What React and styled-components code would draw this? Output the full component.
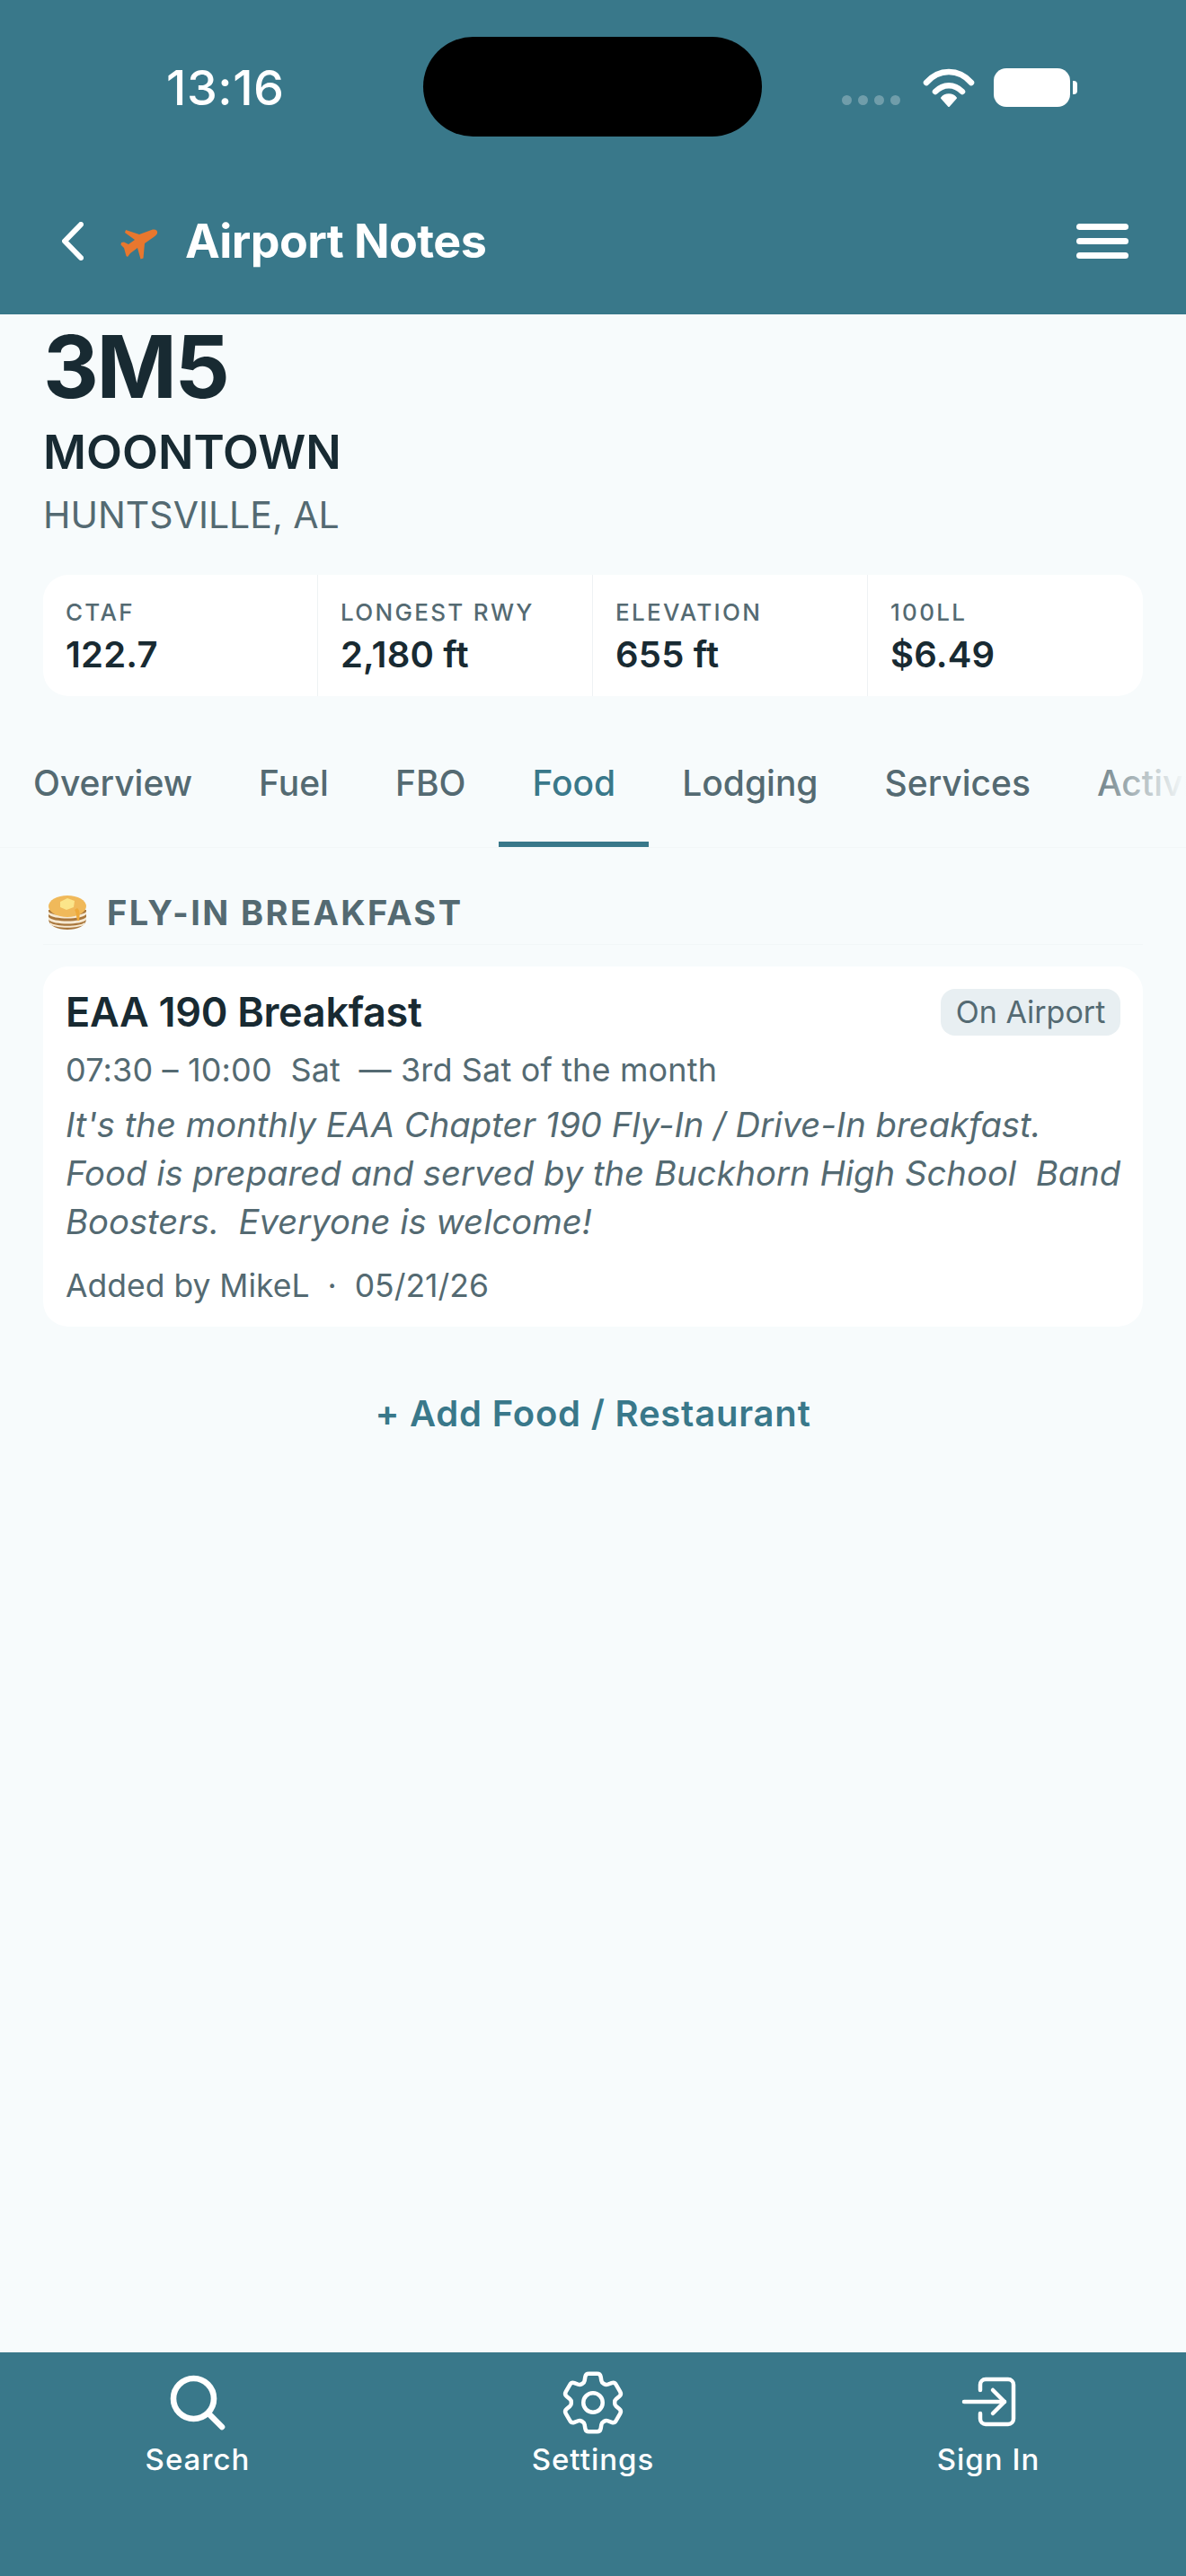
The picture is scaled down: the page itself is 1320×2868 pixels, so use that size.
import React from 'react';
import styled, { createGlobalStyle } from 'styled-components';
import { HiOutlineMagnifyingGlass, HiOutlineCog6Tooth } from 'react-icons/hi2';

const TEAL = '#39788a';
const INK = '#182a32';
const MUTED = '#546a72';
const PAGE = '#f7fbfc';

const stats = [
  { label: 'CTAF', value: '122.7' },
  { label: 'LONGEST RWY', value: '2,180 ft' },
  { label: 'ELEVATION', value: '655 ft' },
  { label: '100LL', value: '$6.49' },
];

const tabs = ['Overview', 'Fuel', 'FBO', 'Food', 'Lodging', 'Services', 'Activity'];

const GlobalStyle = createGlobalStyle`
  html, body {
    margin: 0;
    padding: 0;
    background: ${PAGE};
  }
  * {
    box-sizing: border-box;
  }
`;

const PlaneIcon = () => (
  <PlaneSvg viewBox="0 0 44 36">
    <path d="M7 2L22 7L37 1.5Q43 1 42 6Q41 8 38 10L28 17L26.5 33.5L23.5 34.5L20 22L12 28L9 32L7.5 31L5 22L1.5 18.5L2 16L5 15.5L10 18L17 13L6 5Z" />
  </PlaneSvg>
);

const WifiIcon = () => (
  <WifiSvg viewBox="0 0 58 44" fill="none" stroke="#fff" strokeLinecap="round">
    <path d="M4 17C18 1 40 1 54 17" strokeWidth="6.5" />
    <path d="M14 27c9-9 21-9 30 0" strokeWidth="6.5" />
    <path d="M29 43l-8-9c4-5 12-5 16 0z" fill="#fff" stroke="#fff" strokeWidth="2" strokeLinejoin="round" />
  </WifiSvg>
);

const PancakeIcon = () => (
  <svg width="44" height="38" viewBox="0 0 44 38">
    <path d="M1 16v10c0 8 10 12 21 12s21-4 21-12V16z" fill="#a8763c" />
    <path d="M1 18c5 6 37 6 42 0v3c-5 6-37 6-42 0z" fill="#f6e9d2" />
    <path d="M1 24c5 6 37 6 42 0v3c-5 6-37 6-42 0z" fill="#f6e9d2" />
    <path d="M3 30c5 5 33 5 38 0v2c-5 5-33 5-38 0z" fill="#f6e9d2" />
    <ellipse cx="22" cy="12" rx="21" ry="12" fill="#f0b95a" />
    <path d="M14 7l8-4 8 3-1 7-8 3-7-3z" fill="#fbe58a" />
    <path d="M33 14c3 2 3 8 2 14h-2c-1-4-1-9-3-12z" fill="#eea93a" />
  </svg>
);

const SignInIcon = () => (
  <svg width="72" height="72" viewBox="0 0 72 72" fill="none" stroke="#fff" strokeWidth="4.5" strokeLinecap="round" strokeLinejoin="round">
    <path d="M27 22v-6a6 6 0 0 1 6-6h25a6 6 0 0 1 6 6v38a6 6 0 0 1-6 6H33a6 6 0 0 1-6-6v-6" />
    <path d="M9 35h45" />
    <path d="M41 22l13 13-13 13" />
  </svg>
);

export default function App() {
  return (
    <Page>
      <GlobalStyle />
      <Header>
        <StatusBar>
          <Clock>13:16</Clock>
          <Island />
          <StatusIcons>
            <Dots>
              <Dot />
              <Dot />
              <Dot />
              <Dot />
            </Dots>
            <WifiIcon />
            <Battery>
              <BatteryNub />
            </Battery>
          </StatusIcons>
        </StatusBar>
        <NavRow>
          <BackChevron viewBox="0 0 24 43" fill="none" stroke="#fff" strokeWidth="6" strokeLinecap="round" strokeLinejoin="round">
            <path d="M21 3L3 21.5 21 40" />
          </BackChevron>
          <PlaneIcon />
          <NavTitle>Airport Notes</NavTitle>
          <Burger>
            <BurgerBar />
            <BurgerBar />
            <BurgerBar />
          </Burger>
        </NavRow>
      </Header>

      <Main>
        <Hero>
          <Code>3M5</Code>
          <AirportName>MOONTOWN</AirportName>
          <City>HUNTSVILLE, AL</City>
        </Hero>

        <StatsCard>
          {stats.map((s) => (
            <StatCell key={s.label}>
              <StatLabel>{s.label}</StatLabel>
              <StatValue>{s.value}</StatValue>
            </StatCell>
          ))}
        </StatsCard>

        <TabBar>
          {tabs.map((t) => (
            <Tab key={t} $active={t === 'Food'}>
              {t}
            </Tab>
          ))}
          <TabFade />
        </TabBar>

        <Section>
          <SectionHead>
            <PancakeIcon />
            <SectionTitle>FLY-IN BREAKFAST</SectionTitle>
          </SectionHead>
          <Card>
            <CardTop>
              <CardTitle>EAA 190 Breakfast</CardTitle>
              <Badge>On Airport</Badge>
            </CardTop>
            <Hours>07:30 – 10:00&nbsp; Sat &nbsp;— 3rd Sat of the month</Hours>
            <Note>
              It's the monthly EAA Chapter 190 Fly-In / Drive-In breakfast.
              <br />
              Food is prepared and served by the Buckhorn High School&nbsp; Band
              <br />
              Boosters.&nbsp; Everyone is welcome!
            </Note>
            <Meta>Added by MikeL &nbsp;·&nbsp; 05/21/26</Meta>
          </Card>
          <AddLink>+ Add Food / Restaurant</AddLink>
        </Section>
      </Main>

      <BottomNav>
        <NavItem>
          <IconSlot>
            <HiOutlineMagnifyingGlass size={72} color="#fff" strokeWidth={2.2} />
          </IconSlot>
          <NavLabel>Search</NavLabel>
        </NavItem>
        <NavItem>
          <IconSlot>
            <GearIcon size={86} color="#fff" strokeWidth={1.25} />
          </IconSlot>
          <NavLabel>Settings</NavLabel>
        </NavItem>
        <NavItem>
          <IconSlot>
            <SignInIcon />
          </IconSlot>
          <NavLabel>Sign In</NavLabel>
        </NavItem>
      </BottomNav>
    </Page>
  );
}

const Page = styled.div`
  width: 1320px;
  height: 2868px;
  display: flex;
  flex-direction: column;
  background: ${PAGE};
  font-family: Inter, "Liberation Sans", sans-serif;
  overflow: hidden;
`;

const Header = styled.header`
  height: 350px;
  flex: none;
  background: ${TEAL};
  display: flex;
  flex-direction: column;
`;

const StatusBar = styled.div`
  height: 194px;
  padding: 41px 122px 0 185px;
  display: flex;
  align-items: flex-start;
`;

const Clock = styled.div`
  width: 286px;
  margin-top: 41px;
  font-size: 54px;
  line-height: 32px;
  font-weight: 500;
  letter-spacing: 0.5px;
  color: #fff;
`;

const Island = styled.div`
  width: 377px;
  height: 111px;
  border-radius: 56px;
  background: #000;
`;

const StatusIcons = styled.div`
  margin-left: 89px;
  margin-top: 34px;
  display: flex;
  align-items: flex-start;
`;

const Dots = styled.div`
  display: flex;
  gap: 7px;
  margin-top: 31px;
  margin-right: 25px;
`;

const Dot = styled.span`
  width: 11px;
  height: 11px;
  border-radius: 50%;
  background: rgba(255, 255, 255, 0.28);
`;

const WifiSvg = styled.svg`
  width: 58px;
  height: 44px;
`;

const Battery = styled.div`
  position: relative;
  width: 85px;
  height: 43px;
  margin-left: 21px;
  margin-top: 1px;
  border-radius: 14px;
  background: #fff;
`;

const BatteryNub = styled.span`
  position: absolute;
  right: -8px;
  top: 14px;
  width: 5px;
  height: 15px;
  border-radius: 0 4px 4px 0;
  background: #fff;
`;

const NavRow = styled.div`
  height: 156px;
  padding: 53px 64px 0 69px;
  display: flex;
  align-items: flex-start;
`;

const BackChevron = styled.svg`
  width: 24px;
  height: 43px;
`;

const PlaneSvg = styled.svg`
  width: 44px;
  height: 36px;
  margin: 7px 0 0 40px;
  fill: #e8772e;
`;

const NavTitle = styled.h1`
  margin: -4px 0 0 29px;
  flex: 1;
  font-size: 52px;
  line-height: 52px;
  font-weight: 700;
  letter-spacing: -0.6px;
  color: #fff;
`;

const Burger = styled.div`
  width: 58px;
  margin-top: 2px;
  display: flex;
  flex-direction: column;
  gap: 9px;
`;

const BurgerBar = styled.span`
  height: 7px;
  border-radius: 4px;
  background: #fff;
`;

const Main = styled.main`
  flex: 1;
  min-height: 0;
  display: flex;
  flex-direction: column;
`;

const Hero = styled.div`
  padding: 10px 48px 0;
`;

const Code = styled.div`
  font-size: 96px;
  line-height: 96px;
  font-weight: 700;
  letter-spacing: -2.5px;
  color: ${INK};
`;

const AirportName = styled.div`
  margin-top: 18px;
  font-size: 52px;
  line-height: 60px;
  font-weight: 600;
  color: ${INK};
`;

const City = styled.div`
  margin-top: 14px;
  font-size: 41px;
  line-height: 50px;
  color: ${MUTED};
`;

const StatsCard = styled.div`
  margin: 42px 48px 0;
  height: 135px;
  display: grid;
  grid-template-columns: repeat(4, 1fr);
  background: #fff;
  border-radius: 28px;
`;

const StatCell = styled.div`
  padding: 26px 25px 0;
  border-right: 1px solid #eef2f4;
  &:last-child {
    border-right: none;
  }
`;

const StatLabel = styled.div`
  font-size: 26px;
  line-height: 32px;
  font-weight: 500;
  letter-spacing: 2.3px;
  color: ${MUTED};
`;

const StatValue = styled.div`
  margin-top: 8px;
  font-size: 40px;
  line-height: 46px;
  font-weight: 600;
  letter-spacing: 0.2px;
  color: ${INK};
`;

const TabBar = styled.div`
  position: relative;
  margin-top: 52px;
  height: 117px;
  display: flex;
  overflow: hidden;
  border-bottom: 1px solid #f2f7f8;
`;

const Tab = styled.div`
  flex: none;
  padding: 21px 37px 0;
  font-size: 39px;
  line-height: 48px;
  font-weight: 500;
  color: ${(p) => (p.$active ? TEAL : MUTED)};
  border-bottom: 6px solid ${(p) => (p.$active ? TEAL : 'transparent')};
`;

const TabFade = styled.div`
  position: absolute;
  right: 0;
  top: 0;
  bottom: 0;
  width: 120px;
  background: linear-gradient(to right, rgba(247, 251, 252, 0), ${PAGE});
`;

const Section = styled.section`
  padding: 0 48px;
  display: flex;
  flex-direction: column;
`;

const SectionHead = styled.div`
  height: 108px;
  padding: 52px 5px 16px;
  display: flex;
  align-items: center;
  gap: 22px;
  border-bottom: 1px solid #f1f6f8;
`;

const SectionTitle = styled.h2`
  margin: 0;
  font-size: 38px;
  line-height: 44px;
  font-weight: 700;
  letter-spacing: 2.4px;
  color: ${MUTED};
`;

const Card = styled.div`
  margin-top: 24px;
  height: 401px;
  padding: 25px 25px 0 25px;
  background: #fff;
  border-radius: 28px;
`;

const CardTop = styled.div`
  display: flex;
  justify-content: space-between;
  align-items: center;
`;

const CardTitle = styled.div`
  font-size: 45px;
  line-height: 52px;
  font-weight: 600;
  letter-spacing: -0.3px;
  color: ${INK};
`;

const Badge = styled.span`
  height: 52px;
  width: 200px;
  border-radius: 16px;
  background: #e8eff2;
  font-size: 34px;
  line-height: 52px;
  text-align: center;
  color: ${MUTED};
`;

const Hours = styled.div`
  margin-top: 16px;
  font-size: 36px;
  line-height: 44px;
  letter-spacing: 0.15px;
  color: ${MUTED};
`;

const Note = styled.div`
  margin-top: 12px;
  font-size: 38.25px;
  line-height: 54px;
  font-style: italic;
  white-space: nowrap;
  color: ${MUTED};
`;

const Meta = styled.div`
  margin-top: 23px;
  font-size: 35.5px;
  line-height: 44px;
  color: ${MUTED};
`;

const AddLink = styled.div`
  margin-top: 72px;
  text-align: center;
  font-size: 40px;
  line-height: 50px;
  font-weight: 600;
  letter-spacing: 0.8px;
  color: ${TEAL};
`;

const BottomNav = styled.nav`
  height: 249px;
  flex: none;
  background: ${TEAL};
  padding-top: 20px;
  display: grid;
  grid-template-columns: repeat(3, 1fr);
  align-items: start;
`;

const NavItem = styled.div`
  display: flex;
  flex-direction: column;
  align-items: center;
`;

const IconSlot = styled.div`
  height: 72px;
  display: flex;
  align-items: center;
`;

const GearIcon = styled(HiOutlineCog6Tooth)`
  margin: -7px 0;
`;

const NavLabel = styled.div`
  margin-top: 7px;
  font-size: 33px;
  line-height: 40px;
  font-weight: 500;
  letter-spacing: 1px;
  color: #fff;
`;
